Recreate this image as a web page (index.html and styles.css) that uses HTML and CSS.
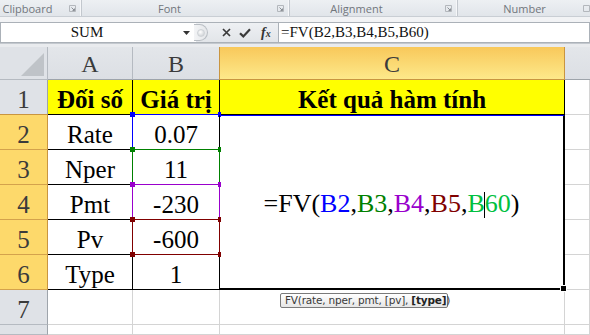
FILE: index.html
```html
<!DOCTYPE html>
<html>
<head>
<meta charset="utf-8">
<link rel="stylesheet" href="styles.css">
</head>
<body>
<div class="ribbon">
  <div class="group g-clip"><span class="glabel">Clipboard</span><svg class="launch" width="7" height="7" viewBox="0 0 7 7"><path d="M0.5 0.5H6.5V6.5H0.5Z" fill="none" stroke="#b3b7bc"/><path d="M2.5 2.5L5.5 5.5M3.5 5.5H5.5V3.5" fill="none" stroke="#8a8f95"/></svg></div>
  <div class="group g-font"><span class="glabel">Font</span><svg class="launch" width="7" height="7" viewBox="0 0 7 7"><path d="M0.5 0.5H6.5V6.5H0.5Z" fill="none" stroke="#b3b7bc"/><path d="M2.5 2.5L5.5 5.5M3.5 5.5H5.5V3.5" fill="none" stroke="#8a8f95"/></svg></div>
  <div class="group g-align"><span class="glabel">Alignment</span><svg class="launch" width="7" height="7" viewBox="0 0 7 7"><path d="M0.5 0.5H6.5V6.5H0.5Z" fill="none" stroke="#b3b7bc"/><path d="M2.5 2.5L5.5 5.5M3.5 5.5H5.5V3.5" fill="none" stroke="#8a8f95"/></svg></div>
  <div class="group g-num"><span class="glabel">Number</span><svg class="launch" width="7" height="7" viewBox="0 0 7 7"><path d="M0.5 0.5H6.5V6.5H0.5Z" fill="none" stroke="#b3b7bc"/></svg></div>
</div>
<div class="gap1"></div>
<div class="fbar">
  <div class="namebox"><span class="name">SUM</span><svg class="dd" width="7" height="4" viewBox="0 0 7 4"><path d="M0 0H7L3.5 4Z" fill="#333"/></svg></div>
  <div class="fbtns">
    <span class="grip"><span class="dot"></span></span>
    <svg class="ic-x" width="9" height="9" viewBox="0 0 9 9"><path d="M1 1L8 8M8 1L1 8" stroke="#3a3a3a" stroke-width="1.7"/></svg>
    <svg class="ic-ok" width="12" height="10" viewBox="0 0 12 10"><path d="M1 5.2L4.3 8.4L11 1.2" fill="none" stroke="#3a3a3a" stroke-width="2.2"/></svg>
    <span class="fx"><i>f</i><i class="fxx">x</i></span>
  </div>
  <div class="finput">=FV(B2,B3,B4,B5,B60)</div>
</div>
<div class="gap2"></div>
<div class="sheet">
  <div class="corner"><span class="tri"></span></div>
  <div class="ch">A</div>
  <div class="ch">B</div>
  <div class="ch sel">C</div>
  <div class="ch last"></div>

  <div class="rh">1</div>
  <div class="cell tb yel">Đối số</div>
  <div class="cell tb yel">Giá trị</div>
  <div class="cell tb yel wide">Kết quả hàm tính</div>
  <div class="cell gd"></div>

  <div class="rh sel first">2</div>
  <div class="cell tb">Rate</div>
  <div class="cell tb rng"><span class="box b-blue"><i class="h tl"></i><i class="h tr"></i><i class="h bl"></i><i class="h br"></i></span>0.07</div>
  <div class="merged"><span class="f">=FV(<span class="c1">B2</span>,<span class="c2">B3</span>,<span class="c3">B4</span>,<span class="c4">B5</span>,<span class="c5">B<span class="caret"></span>60</span>)</span><i class="handle"></i></div>
  <div class="cell gd"></div>

  <div class="rh sel">3</div>
  <div class="cell tb">Nper</div>
  <div class="cell tb rng"><span class="box b-green"><i class="h tl"></i><i class="h tr"></i><i class="h bl"></i><i class="h br"></i></span>11</div>
  <div class="cell gd"></div>

  <div class="rh sel">4</div>
  <div class="cell tb">Pmt</div>
  <div class="cell tb rng"><span class="box b-purple"><i class="h tl"></i><i class="h tr"></i><i class="h bl"></i><i class="h br"></i></span>-230</div>
  <div class="cell gd"></div>

  <div class="rh sel">5</div>
  <div class="cell tb">Pv</div>
  <div class="cell tb rng"><span class="box b-red"><i class="h tl"></i><i class="h tr"></i><i class="h bl"></i><i class="h br"></i></span>-600</div>
  <div class="cell gd"></div>

  <div class="rh sel">6</div>
  <div class="cell tb">Type</div>
  <div class="cell tb">1</div>
  <div class="cell gd"></div>

  <div class="rh">7</div>
  <div class="cell gd"></div>
  <div class="cell gd"></div>
  <div class="cell gd"></div>
  <div class="cell gd"></div>

  <div class="rh"></div>
  <div class="cell gd"></div>
  <div class="cell gd"></div>
  <div class="cell gd"></div>
  <div class="cell gd"></div>
</div>
<div class="tip">FV(rate, nper, pmt, [pv], <b>[type]</b>)</div>
</body>
</html>
```
FILE: styles.css
```css
html, body { margin: 0; padding: 0; }
body {
  width: 590px;
  height: 335px;
  overflow: hidden;
  background: #fff;
  position: relative;
  font-family: "Liberation Serif", "Times New Roman", serif;
}

/* ribbon group labels */
.ribbon {
  display: flex;
  height: 17px;
  background: linear-gradient(#edf0f3, #e1e5ea);
  border-bottom: 1px solid #c9ced4;
  box-sizing: border-box;
}
.group {
  display: flex;
  align-items: center;
  box-sizing: border-box;
  border-right: 1px solid #c3c8ce;
  box-shadow: inset -1px 0 0 #f6f7f9;
  padding-right: 5px;
}
.g-clip { width: 82px; }
.g-font { width: 208px; }
.g-align { width: 168px; }
.g-num { width: 132px; border-right: none; box-shadow: none; padding-right: 0; justify-content: flex-end; }
.glabel {
  flex: 1;
  text-align: center;
  font: 11px "Open Sans", "DejaVu Sans", sans-serif;
  color: #71767c;
  padding-right: 10px;
  line-height: 15px;
  padding-top: 1px;
}
.g-clip .glabel { padding-right: 14px; }
.g-font .glabel { padding-right: 20px; }
.g-align .glabel { padding-right: 22px; }
.g-num .glabel { padding-right: 0; padding-left: 8px; }
.launch { flex: none; }

.gap1 { height: 5px; background: #f2f3f5; }

/* formula bar */
.fbar {
  display: flex;
  height: 21px;
}
.namebox {
  width: 196px;
  box-sizing: border-box;
  border: 1px solid #abb1b8;
  border-right: none;
  background: #fff;
  display: flex;
  align-items: center;
  padding-right: 6px;
}
.name {
  flex: 1;
  text-align: center;
  font-family: "Liberation Serif", serif;
  font-size: 15px;
  color: #111;
  padding-right: 10px;
}
.dd { flex: none; margin-top: 1px; }
.fbtns {
  width: 82px;
  box-sizing: border-box;
  display: flex;
  align-items: center;
  background: linear-gradient(#eef0f3, #e2e5e9);
  border-top: 1px solid #abb1b8;
  border-bottom: 1px solid #abb1b8;
}
.grip {
  width: 14px;
  height: 17px;
  margin-left: -2px;
  border-radius: 0 9px 9px 0;
  border: 1px solid #b8bdc3;
  border-left: none;
  background: linear-gradient(90deg, #f3f4f6, #e5e7ea);
  display: flex;
  align-items: center;
  justify-content: center;
  box-sizing: border-box;
}
.dot {
  width: 6px;
  height: 6px;
  border-radius: 50%;
  background: radial-gradient(circle at 40% 35%, #fff, #c4c8cd);
  border: 1px solid #cfd3d7;
}
.ic-x { margin-left: 14px; }
.ic-ok { margin-left: 8px; }
.fx {
  margin-left: 10px;
  font-family: "Liberation Serif", serif;
  font-weight: bold;
  font-size: 14px;
  color: #333;
  line-height: 1;
}
.fxx { font-size: 10px; }
.finput {
  flex: 1;
  box-sizing: border-box;
  border: 1px solid #abb1b8;
  background: #fff;
  font-family: "Liberation Serif", serif;
  font-size: 15px;
  color: #111;
  padding-left: 2px;
  line-height: 19px;
}

.gap2 {
  height: 4px;
  background: #e9ebee;
  border-top: 1px solid #c3c8ce;
  box-sizing: border-box;
}

/* sheet */
.sheet {
  display: grid;
  grid-template-columns: 48px 85px 87px 345px 25px;
  grid-template-rows: 33px repeat(7, 35px) 10px;
  font-family: "Liberation Serif", "Times New Roman", serif;
}
.corner {
  background: #dfe2e7;
  border-right: 1px solid #b5bac1;
  border-bottom: 1px solid #b5bac1;
  box-sizing: border-box;
  position: relative;
}
.tri {
  position: absolute;
  right: 3px;
  bottom: 3px;
  width: 0;
  height: 0;
  border-left: 23px solid transparent;
  border-bottom: 23px solid #bfc3c8;
}
.ch {
  background: linear-gradient(#e3e6ea, #dcdfe4);
  border-right: 1px solid #b5bac1;
  border-bottom: 1px solid #9ea4ab;
  box-sizing: border-box;
  display: flex;
  align-items: center;
  justify-content: center;
  font-size: 24px;
  color: #3b3b3b;
  padding-top: 3px;
}
.ch.sel {
  background: linear-gradient(#f8c85a, #fde98a);
  border-right: 1px solid #c99540;
  border-bottom: 1px solid #c99540;
  border-left: 1px solid #c99540;
  margin-left: -1px;
}
.ch.last { border-right: none; }
.rh {
  background: #dfe2e7;
  border-right: 1px solid #9ea4ab;
  border-bottom: 1px solid #b5bac1;
  box-sizing: border-box;
  display: flex;
  align-items: flex-end;
  justify-content: center;
  font-size: 25px;
  line-height: 1;
  color: #3b3b3b;
  padding-bottom: 2px;
}
.rh.sel {
  background: #fdd96b;
  border-right: 1px solid #c99540;
  border-bottom: 1px solid #d4a24c;
}
.rh.first { border-top: 1px solid #c99540; margin-top: -1px; }
.cell {
  box-sizing: border-box;
  display: flex;
  align-items: flex-end;
  justify-content: center;
  font-family: "Liberation Serif", "Times New Roman", serif;
  font-size: 25px;
  line-height: 1;
  color: #000;
  padding-bottom: 2px;
  white-space: nowrap;
}
.tb {
  border-right: 1px solid #000;
  border-bottom: 1px solid #000;
}
.gd {
  border-right: 1px solid #d4d4d4;
  border-bottom: 1px solid #d4d4d4;
}
.yel {
  background: #ffff00;
  font-weight: bold;
}
.rng { position: relative; }
.box {
  position: absolute;
  left: -1px;
  top: -1px;
  right: -1px;
  bottom: -1px;
  border: 1px solid;
}
.b-blue { border-color: #0000ff; color: #0000ff; }
.b-green { border-color: #008000; color: #008000; }
.b-purple { border-color: #9900cc; color: #9900cc; }
.b-red { border-color: #800000; color: #800000; }
.h {
  position: absolute;
  width: 5px;
  height: 5px;
  background: currentColor;
}
.tl { left: -3px; top: -3px; }
.tr { right: -2px; top: -3px; width: 3px; }
.bl { left: -3px; bottom: -3px; }
.br { right: -2px; bottom: -3px; width: 3px; }

.merged {
  grid-row: span 5;
  box-sizing: border-box;
  border-top: 1px solid #0000ff;
  border-right: 2px solid #000;
  border-bottom: 2px solid #000;
  border-left: 1px solid #000;
  margin-left: -1px;
  display: flex;
  align-items: center;
  justify-content: center;
  font-family: "Liberation Serif", "Times New Roman", serif;
  font-size: 26px;
  position: relative;
  padding-top: 4px;
}
.f { color: #000; white-space: nowrap; }
.c1 { color: #0000ff; }
.c2 { color: #008000; }
.c3 { color: #9900cc; }
.c4 { color: #800000; }
.c5 { color: #00c040; }
.caret {
  display: inline-block;
  width: 1px;
  height: 26px;
  background: #000;
  vertical-align: -6px;
  margin: 0 0 0 -1px;
}
.handle {
  position: absolute;
  right: -4px;
  bottom: -4px;
  width: 5px;
  height: 5px;
  background: #000;
  border: 1px solid #fff;
  box-sizing: content-box;
}

/* tooltip */
.tip {
  position: absolute;
  left: 280px;
  top: 293px;
  width: 168px;
  height: 15px;
  box-sizing: border-box;
  border: 1px solid #7a7a7a;
  border-radius: 2px;
  background: linear-gradient(#ffffff, #e6e6e6);
  font: 10.5px "DejaVu Sans", sans-serif;
  color: #3a3a3a;
  line-height: 13px;
  padding-left: 4px;
  white-space: nowrap;
  letter-spacing: -0.2px;
}
.tip b { color: #222; }
```
